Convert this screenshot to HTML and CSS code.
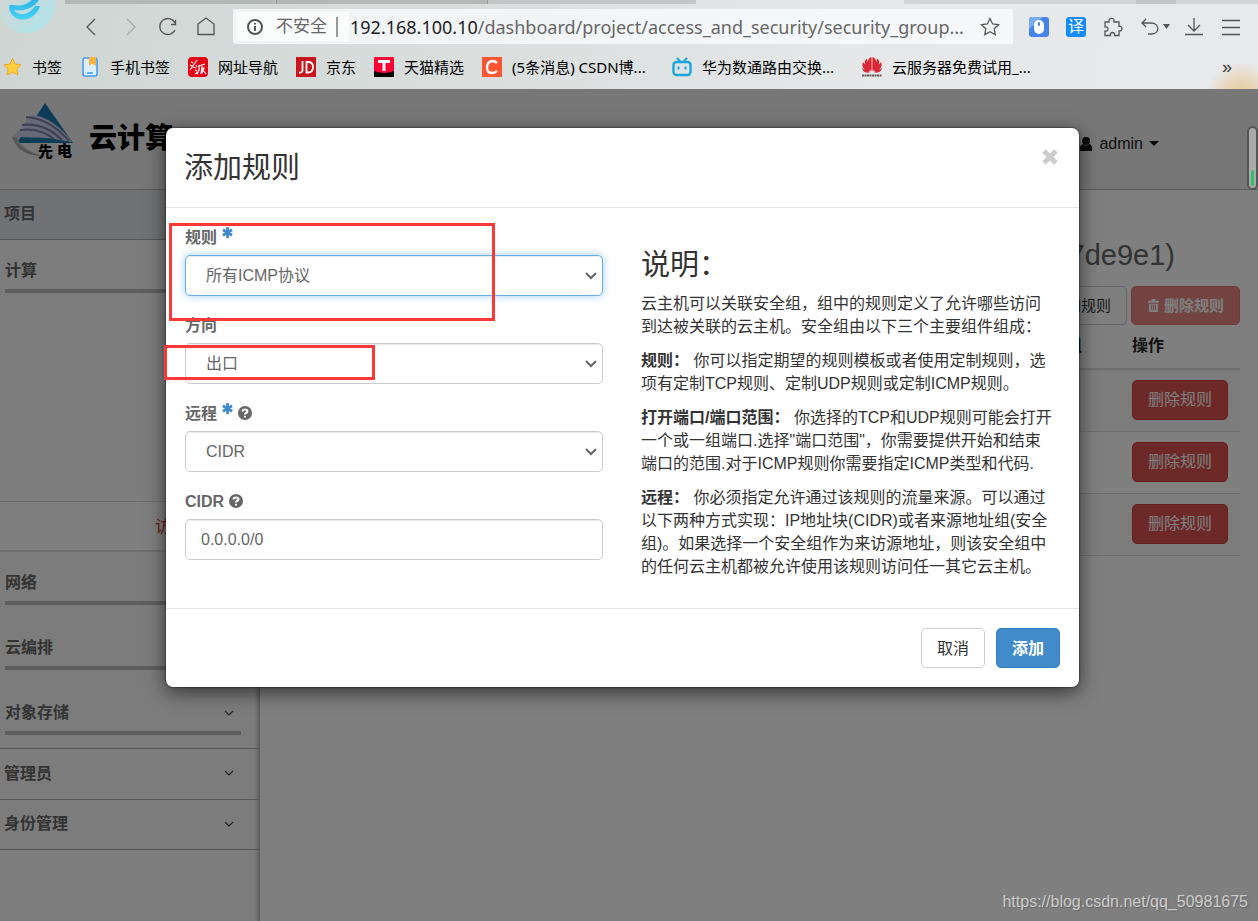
FILE: index.html
```html
<!DOCTYPE html>
<html lang="zh-CN">
<head>
<meta charset="utf-8">
<title>添加规则</title>
<link rel="stylesheet" href="styles.css">
</head>
<body>
<header class="browser">
  <div class="tabs"><span class="tab tab-first"></span><span class="tab tab-second"></span><span class="tab tab-third"></span><span class="tab-current"></span><span class="tab tab-light"></span><span class="tab tab-new"></span><span class="tab-rest"></span></div>
  <div class="toolbar">
    <svg class="brand" viewBox="0 0 56 34" aria-hidden="true">
      <defs>
        <linearGradient id="disc" x1="0" y1="0" x2="1" y2="1"><stop offset="0.300" stop-color="#cfd8d7"/><stop offset="1" stop-color="#a9e4ec"/></linearGradient>
        <linearGradient id="swirl" x1="0" y1="0" x2="0" y2="1"><stop offset="0" stop-color="#2bb0e6"/><stop offset="1" stop-color="#43d3f3"/></linearGradient>
      </defs>
      <circle cx="26" cy="4" r="29" fill="url(#disc)"/>
      <path d="M9 7C10 17 18 21 27 19C34 17 38 12 40 6L35 6C31 12 25 15 20 14C17 13 15 12 14 10C24 12 36 8 41 -4L34 -4C31 3 22 7 13 5Q9 4 9 7Z" fill="url(#swirl)"/>
    </svg>
    <nav class="nav-buttons">
      <button class="icon-button" aria-label="后退"><svg viewBox="0 0 20 20"><path d="M13 2L5 10L13 18"/></svg></button>
      <button class="icon-button faint" aria-label="前进"><svg viewBox="0 0 20 20"><path d="M7 2L15 10L7 18"/></svg></button>
      <button class="icon-button" aria-label="刷新"><svg viewBox="0 0 20 20"><path d="M17 6A8 8 0 1 0 17 13M17.500 3V7.500H13"/></svg></button>
      <button class="icon-button" aria-label="主页"><svg viewBox="0 0 20 20"><path d="M2 7L10 1L18 7V17.500H2Z"/></svg></button>
    </nav>
    <div class="address">
      <div class="security">
        <svg class="info" viewBox="0 0 18 18"><circle cx="9" cy="9" r="7"/><path d="M9 8V13M9 5V6.500"/></svg>
        <span>不安全</span><i class="security-bar"></i>
      </div>
      <div class="url"><b>192.168.100.10</b>/dashboard/project/access_and_security/security_group...</div>
      <button class="icon-button" aria-label="收藏"><svg viewBox="0 0 20 20"><path d="M10 1.500L12.600 7L18.500 7.700L14.200 11.800L15.300 17.700L10 14.800L4.700 17.700L5.800 11.800L1.500 7.700L7.400 7Z"/></svg></button>
    </div>
    <div class="extensions">
      <button class="icon-button" aria-label="鼠标手势"><svg class="solid" viewBox="0 0 20 20"><rect width="20" height="20" rx="3" fill="#4585ea"/><path d="M0 12V3Q0 0 3 0H14Z" fill="#79acf2"/><rect x="5" y="3" width="10" height="14" rx="5" fill="#fff"/><rect x="9" y="5" width="2" height="4" rx="1" fill="#4585ea"/></svg></button>
      <button class="translate" aria-label="翻译">译</button>
      <button class="icon-button" aria-label="扩展"><svg viewBox="0 0 20 20"><path d="M2 5H6C5 1 11 0 11 3.500V5H16V9.500C20 8 20 15 16 14V18.500H11.500C12.500 14.500 6.500 14.500 7.500 18.500H2V14C6 15 6 9 2 10Z"/></svg></button>
      <button class="icon-button undo" aria-label="撤销"><svg viewBox="0 0 30 20"><path d="M6 2L2 6L6 10M2 6H11C20 6 20 17 11 17H8"/><path d="M23 7H30L26.500 12Z" fill="#555" stroke="none"/></svg></button>
      <button class="icon-button" aria-label="下载"><svg viewBox="0 0 20 20"><path d="M10 1V13M4 8L10 14L16 8M1 17.500H19"/></svg></button>
      <button class="icon-button" aria-label="菜单"><svg viewBox="0 0 20 20"><path d="M1 3.500H19M1 10.500H19M1 17.500H19"/></svg></button>
    </div>
  </div>
  <nav class="bookmarks">
    <a href="#" class="bookmark"><svg viewBox="0 0 20 20"><path d="M10.500 1.500L13.200 7L19 7.800L14.800 12L15.900 18L10.500 15.200L5.100 18L6.200 12L2 7.800L7.800 7Z" fill="#ffcf3c" stroke="#f5a52d"/></svg><span>书签</span></a>
    <a href="#" class="bookmark"><svg viewBox="0 0 20 20"><rect x="3" y="1" width="14" height="18" rx="2" fill="#dcefff" stroke="#3f9bf5" stroke-width="1.500"/><path d="M8 0H16V9L12.500 6.500L9 9V0Z" fill="#f8b23e"/><path d="M7 16H13" stroke="#3f9bf5" stroke-width="1.500"/></svg><span>手机书签</span></a>
    <a href="#" class="bookmark"><svg viewBox="0 0 20 20"><rect width="20" height="20" rx="4" fill="#e60012"/><path d="M3 5L5 6M2 8L4 9M9 3L2 13M5 10L8 11M8 8L9 10M7 13L9 14M7 17L10 15M11 8V13L9 17M11 9L17 7M14 9L13 17M13 11H16L14 16M14 12L18 17" stroke="#fff" stroke-width="1.200" fill="none"/></svg><span>网址导航</span></a>
    <a href="#" class="bookmark"><svg viewBox="0 0 20 20"><rect width="20" height="20" fill="#c9151e"/><path d="M6.500 4V13Q6.500 16 3 15.500M10.500 5V15.500H12Q17 15.500 17 10Q17 5 12 5Z" stroke="#fff" stroke-width="1.800" fill="none"/></svg><span>京东</span></a>
    <a href="#" class="bookmark"><svg viewBox="0 0 20 20"><rect width="20" height="20" fill="#ff0036"/><path d="M0 14Q10 18 20 14V20H0Z" fill="#000"/><path d="M4 4.500H16M10 4V14" stroke="#fff" stroke-width="3" fill="none"/></svg><span>天猫精选</span></a>
    <a href="#" class="bookmark long"><svg viewBox="0 0 20 20"><rect width="20" height="20" fill="#fc5531"/><path d="M15 6Q13 4 10.500 4Q5 4.500 5 10.500Q5 16 10 16Q13 16 15 14" stroke="#fff" stroke-width="2.400" fill="none"/></svg><span>(5条消息) CSDN博...</span></a>
    <a href="#" class="bookmark long"><svg viewBox="0 0 20 20"><rect x="1.500" y="5" width="17" height="13" rx="3" fill="none" stroke="#19a5dd" stroke-width="2.400"/><path d="M5 1L8 4M15 1L12 4M6.500 9.500V12.500M13.500 9.500V12.500" stroke="#19a5dd" stroke-width="2"/></svg><span>华为数通路由交换...</span></a>
    <a href="#" class="bookmark long"><svg viewBox="0 0 20 20"><g fill="#dc2535"><path d="M9.700 14C4 8 5 1 9.500 0ZM10.300 14C16 8 15 1 10.500 0ZM9 14C3 11 1 5 4.500 1.500ZM11 14C17 11 19 5 15.500 1.500ZM8.500 14.500C2 14 -1 9 1 5ZM11.500 14.500C18 14 21 9 19 5ZM8 15.200C4 16.500 1 15 0 11ZM12 15.200C16 16.500 19 15 20 11Z"/></g><path d="M0 18.500H20" stroke="#655" stroke-width="2" stroke-dasharray="2 .5"/></svg><span>云服务器免费试用_...</span></a>
    <button class="more" aria-label="更多书签">»</button>
  </nav>
</header>

<div class="app">
  <header class="site-header">
    <svg class="logo" viewBox="0 0 64 64" aria-hidden="true">
      <path d="M34 2L62 42H8Z" fill="#1878ad"/>
      <path d="M15 16L22 14C37 16 50 26 61 41L47 39C30 36 18 38 4 37L1 36L8 29L12 28L11 24L15 21Z" fill="#cdd1ea"/>
      <path d="M15 16C32 17 46 26 58 40M11 24C27 22 41 29 51 39M9 29C23 27 34 31 43 38" fill="none" stroke="#7780ab" stroke-width="2"/>
      <path d="M6 41L10 36C22 37 36 35 61 42Z" fill="#1878ad"/>
      <path d="M1 36L6 37C10 46 20 53 33 55C18 56 5 49 1 36Z" fill="#aaa"/>
      <path d="M6 40C12 48 24 54 54 55" fill="none" stroke="#ddd" stroke-width="1"/>
      <text x="27" y="56" class="logo-text">先</text><text x="46" y="55" class="logo-text">电</text>
    </svg>
    <strong class="product">云计算</strong>
    <button class="user"><svg viewBox="0 0 14 14"><circle cx="7" cy="4" r="4"/><path d="M1 14Q0 8 4 7Q7 10 10 7Q14 8 13 14Z"/></svg>admin<i class="caret"></i></button>
  </header>
  <div class="columns">
    <aside class="sidebar">
      <a href="#" class="side-item selected">项目</a>
      <div class="group"><a href="#">计算</a></div>
      <div class="submenu"></div>
      <a href="#" class="active-link"><span>访问 &amp; 安全</span></a>
      <div class="group"><a href="#">网络</a></div>
      <div class="group"><a href="#">云编排</a></div>
      <div class="group"><a href="#">对象存储<svg class="chev" viewBox="0 0 10 10"><path d="M1 3L5 7L9 3"/></svg></a></div>
      <a href="#" class="side-item ruled">管理员<svg class="chev" viewBox="0 0 10 10"><path d="M1 3L5 7L9 3"/></svg></a>
      <a href="#" class="side-item">身份管理<svg class="chev" viewBox="0 0 10 10"><path d="M1 3L5 7L9 3"/></svg></a>
    </aside>
    <main class="content">
      <h1>7de9e1)</h1>
      <div class="actions">
        <button class="btn">添加规则</button>
        <button class="btn btn-danger" disabled><svg viewBox="0 0 14 14"><path d="M1 2H5V0H9V2H13V4H1ZM2 5H12V14H2Z"/><path d="M5 6V12M7 6V12M9 6V12" stroke="#d9534f"/></svg>删除规则</button>
      </div>
      <table class="rules">
        <thead><tr><th class="group-col">安全组</th><th class="action-col">操作</th></tr></thead>
        <tbody>
          <tr class="odd"><td></td><td><button class="btn btn-danger">删除规则</button></td></tr>
          <tr><td></td><td><button class="btn btn-danger">删除规则</button></td></tr>
          <tr class="odd"><td></td><td><button class="btn btn-danger">删除规则</button></td></tr>
        </tbody>
      </table>
    </main>
  </div>

  <div class="backdrop">
    <section class="modal" role="dialog" aria-labelledby="modal-title">
      <header class="modal-header">
        <h2 id="modal-title">添加规则</h2>
        <button class="close" aria-label="关闭"><svg viewBox="0 0 16 16"><path d="M2 2L14 14M14 2L2 14"/></svg></button>
      </header>
      <div class="modal-body">
        <form class="form" id="rule-form">
          <div class="field">
            <label for="rule">规则 <svg class="star" viewBox="0 0 12 12"><path d="M6 0V12M1 3L11 9M11 3L1 9"/></svg></label>
            <div class="select-wrap"><select id="rule" class="control focused"><option>所有ICMP协议</option></select><svg class="arrow" viewBox="0 0 12 12"><path d="M1 3L6 8L11 3"/></svg></div>
          </div>
          <div class="field">
            <label for="direction">方向</label>
            <div class="select-wrap"><select id="direction" class="control"><option>出口</option></select><svg class="arrow" viewBox="0 0 12 12"><path d="M1 3L6 8L11 3"/></svg></div>
          </div>
          <div class="field">
            <label for="remote">远程 <svg class="star" viewBox="0 0 12 12"><path d="M6 0V12M1 3L11 9M11 3L1 9"/></svg> <svg class="help" viewBox="0 0 14 14"><circle cx="7" cy="7" r="7"/><path d="M4.500 5.500Q4.500 3.500 7 3.500Q9.500 3.500 9.500 5.500Q9.500 6.500 8 7Q7 7.500 7 8.500M7 9.700V11.500"/></svg></label>
            <div class="select-wrap"><select id="remote" class="control"><option>CIDR</option></select><svg class="arrow" viewBox="0 0 12 12"><path d="M1 3L6 8L11 3"/></svg></div>
          </div>
          <div class="field">
            <label for="cidr">CIDR <svg class="help" viewBox="0 0 14 14"><circle cx="7" cy="7" r="7"/><path d="M4.500 5.500Q4.500 3.500 7 3.500Q9.500 3.500 9.500 5.500Q9.500 6.500 8 7Q7 7.500 7 8.500M7 9.700V11.500"/></svg></label>
            <input id="cidr" class="control" type="text" value="0.0.0.0/0">
          </div>
          <span class="mark mark-rule"></span>
          <span class="mark mark-direction"></span>
        </form>
        <div class="help-text">
          <h3>说明：</h3>
          <p>云主机可以关联安全组，组中的规则定义了允许哪些访问<br>到达被关联的云主机。安全组由以下三个主要组件组成：</p>
          <p><b>规则：</b> 你可以指定期望的规则模板或者使用定制规则，选<br>项有定制TCP规则、定制UDP规则或定制ICMP规则。</p>
          <p><b>打开端口/端口范围：</b> 你选择的TCP和UDP规则可能会打开<br>一个或一组端口.选择"端口范围"，你需要提供开始和结束<br>端口的范围.对于ICMP规则你需要指定ICMP类型和代码.</p>
          <p><b>远程：</b> 你必须指定允许通过该规则的流量来源。可以通过<br>以下两种方式实现：IP地址块(CIDR)或者来源地址组(安全<br>组)。如果选择一个安全组作为来访源地址，则该安全组中<br>的任何云主机都被允许使用该规则访问任一其它云主机。</p>
        </div>
      </div>
      <footer class="modal-footer">
        <button class="btn">取消</button>
        <button class="btn btn-primary" type="submit" form="rule-form">添加</button>
      </footer>
    </section>
  </div>
  <div class="meter"><i></i></div>
  <div class="watermark">https://blog.csdn.net/qq_50981675</div>
</div>
</body>
</html>
```
FILE: styles.css
```css
* { box-sizing: border-box; }
body {
  margin: 0;
  min-height: 100vh;
  display: flex;
  flex-direction: column;
  font: 16px/23px "Liberation Sans", "Noto Sans CJK SC", sans-serif;
  color: #333;
}
button, select, input { font: inherit; color: inherit; margin: 0; }
button { background: none; border: 0; padding: 0; }
a { color: inherit; text-decoration: none; }
svg { display: block; flex: none; }

/* browser frame */
.browser {
  background:
    radial-gradient(circle at 1242px 98px, #e8c48a 0, rgba(232, 210, 170, 0) 36px),
    linear-gradient(100deg, #ced5d3 0, #dadfde 40%, #e6e8e9 70%, #e8e9eb 100%);
  height: 89px;
  overflow: hidden;
}
.tabs { display: flex; height: 4px; padding-left: 65px; }
.tab { background: #b4b9b8; border-right: 1px solid #999; }
.tab-first, .tab-second { flex: 211; }
.tab-third { flex: 208; border-right: 0; background: #c3c6c6; }
.tab-current { flex: 208; }
.tab-light { flex: 233; background: #d2d3d5; border-right: 0; }
.tab-new { flex: 40; background: #c4c5c7; border-right: 0; }
.tab-rest { flex: 82; background: #d2d5d5; }
.toolbar { display: flex; align-items: center; height: 45px; padding-right: 17px; }
.brand { width: 56px; height: 34px; align-self: flex-start; margin: -4px 26px 0 0; }
.nav-buttons { display: flex; gap: 18px; margin-right: 17px; }
.icon-button svg { width: 20px; height: 20px; fill: none; stroke: #555; stroke-width: 1.300; }
.icon-button .solid { stroke: none; }
.faint svg { stroke: #aaa; }
.address {
  flex: 1;
  min-width: 0;
  display: flex;
  align-items: center;
  height: 35px;
  padding: 0 13px 0 3px;
  background: rgba(250, 252, 254, .75);
  border-radius: 2px;
}
.security {
  display: flex;
  align-items: center;
  width: 113px;
  height: 29px;
  padding-left: 10px;
  background: #fafbfb;
  color: #666;
  font-size: 17px;
}
.info { width: 18px; height: 18px; margin-right: 12px; fill: none; stroke: #555; stroke-width: 2; }
.security-bar { width: 2px; height: 20px; margin-left: 9px; background: #999; }
.url {
  flex: 1;
  min-width: 0;
  overflow: hidden;
  white-space: nowrap;
  padding-left: 1px;
  color: #666;
  font: 18px/28px "Noto Sans", sans-serif;
}
.url b { font-weight: 400; color: #222; }
.extensions { display: flex; align-items: center; gap: 17px; margin-left: 16px; }
.translate {
  width: 20px;
  height: 20px;
  border-radius: 3px;
  background: #118bff;
  color: #fff;
  font-size: 16px;
  line-height: 20px;
}
.undo { margin-right: -3px; }
.undo svg { width: 30px; }
.bookmarks { display: flex; align-items: center; gap: 18px; height: 36px; padding: 0 26px 0 2px; }
.bookmark { display: flex; align-items: center; gap: 10px; color: #000; font: 15px/22px "Noto Sans", "Noto Sans CJK SC", sans-serif; white-space: nowrap; }
.bookmark svg { width: 20px; height: 20px; }
.long span { width: 142px; }
.more { margin-left: auto; font-size: 18px; line-height: 20px; }

/* dashboard */
.app { flex: 1; display: flex; flex-direction: column; position: relative; background: #fff; }
.site-header { display: flex; align-items: center; height: 101px; padding: 0 99px 0 11px; background: #eee; border-bottom: 1px solid #bbb; }
.logo { width: 64px; height: 64px; margin: 0 14px 12px 0; }
.logo-text { font: 900 15px "Noto Sans CJK SC", sans-serif; fill: #000; }
.product { color: #000; font-size: 28px; font-weight: 900; line-height: 40px; }
.user { display: flex; align-items: center; gap: 6px; margin: 9px 0 0 auto; color: #222; }
.user svg { width: 14px; height: 14px; fill: #111; }
.caret { border: 5px solid transparent; border-top-color: #111; border-bottom: 0; }
.columns { flex: 1; display: flex; }
.sidebar {
  width: 260px;
  flex: none;
  background: #f9f9f9;
  border-right: 1px solid #bbb;
  box-shadow: inset -4px 0 4px -3px #aaa;
  font-weight: 700;
  color: #666;
}
.side-item { display: flex; align-items: center; justify-content: space-between; height: 50px; padding: 0 25px 2px 4px; border-bottom: 1px solid #aaa; }
.selected { background: #e0e5e9; }
.ruled { margin-top: 13px; border-top: 1px solid #aaa; height: 52px; }
.group { margin: 0 18px 0 5px; padding-top: 19px; border-bottom: 4px solid #bcbcbc; }
.group a { display: flex; align-items: center; justify-content: space-between; height: 30px; padding: 0 7px 7px 0; }
.group + .group { margin-top: 12px; }
.chev { width: 10px; height: 10px; fill: none; stroke: #444; stroke-width: 1.200; }
.submenu { height: 208px; }
.active-link { display: block; height: 51px; padding: 13px 0 0 155px; background: #fff; border-top: 1px solid #ddd; border-bottom: 2px solid #ddd; color: #d43f1a; font-weight: 400; }
.content { flex: 1; min-width: 0; padding: 44px 18px 0 18px; }
.content h1 { margin: 0 65px 10px 0; font-size: 29px; line-height: 42px; font-weight: 400; text-align: right; color: #666; }
.actions { display: flex; justify-content: flex-end; gap: 4px; }
.btn { height: 40px; padding: 0 15px; border: 1px solid #ccc; border-radius: 5px; background: #fff; white-space: nowrap; }
.actions .btn { display: flex; align-items: center; gap: 4px; height: 39px; font-size: 15px; }
.actions svg { width: 13px; height: 13px; fill: #fff; }
.btn-danger { background: #d9534f; border-color: #d43f3a; color: #fff; }
.btn-danger:disabled { opacity: .7; font-weight: 700; }
.btn-primary { background: #428bca; border-color: #357ebd; color: #fff; font-weight: 700; }
.rules { width: 100%; border-collapse: collapse; }
.rules th { height: 44px; padding: 0 0 2px 8px; border-bottom: 2px solid #ddd; color: #222; text-align: left; }
.rules .group-col { padding-right: 42px; text-align: right; }
.rules .action-col { width: 116px; }
.rules td { height: 62px; padding: 0 0 1px 8px; border-bottom: 1px solid #ddd; }
.odd { background: #f9f9f9; }

/* dialog */
.backdrop { position: absolute; inset: 0; padding: 39px 179px 0 166px; background: rgba(0, 0, 0, .5); }
.modal { max-width: 960px; margin: 0 auto; background: #fff; border-radius: 7px; box-shadow: 0 5px 20px rgba(0, 0, 0, .6), 0 0 2px #000; }
.modal-header { display: flex; justify-content: space-between; height: 80px; padding: 20px 21px 0 18px; border-bottom: 1px solid #e5e5e5; }
.modal h2, .modal h3 { margin: 0; font-size: 29px; line-height: 40px; font-weight: 400; }
.close { align-self: flex-start; margin-top: 1px; }
.close svg { width: 16px; height: 16px; stroke: #ccc; stroke-width: 5; }
.modal-body { display: grid; grid-template-columns: 1fr 1fr; gap: 38px; padding: 18px 20px 19px 19px; }
.form { display: flex; flex-direction: column; gap: 18px; position: relative; }
.field { display: flex; flex-direction: column; gap: 7px; }
.field label { display: flex; align-items: center; gap: 5px; line-height: 23px; font-weight: 700; color: #666; }
.star { width: 11px; height: 11px; margin-bottom: 9px; stroke: #428bca; stroke-width: 3; }
.help { width: 14px; height: 14px; fill: #666; }
.help path { fill: none; stroke: #fff; stroke-width: 2; }
.select-wrap { display: grid; align-items: center; }
.select-wrap > * { grid-area: 1 / 1; }
.arrow { width: 12px; height: 12px; margin-right: 6px; justify-self: end; fill: none; stroke: #666; stroke-width: 2; pointer-events: none; }
.control { width: 100%; height: 41px; padding: 0 15px; border: 1px solid #ccc; border-radius: 5px; background: #fff; box-shadow: inset 0 1px 1px rgba(0, 0, 0, .08); color: #666; outline: 0; }
select.control { appearance: none; padding: 0 20px; }
.focused { border-color: #66afe9; box-shadow: inset 0 1px 1px rgba(0, 0, 0, .08), 0 0 9px rgba(102, 175, 233, .6); }
.field label { height: 22px; }
.mark { position: absolute; border: 3px solid #fb3838; pointer-events: none; }
.mark-rule { left: -16px; top: -3px; width: 326px; height: 98px; }
.mark-direction { left: -21px; top: 119px; width: 211px; height: 35px; }
.help-text { padding-top: 19px; white-space: nowrap; }
.help-text h3 { margin-bottom: 7px; }
.help-text p { margin: 0 0 11px; }
.modal-footer { display: flex; justify-content: flex-end; gap: 11px; padding: 19px; border-top: 1px solid #e5e5e5; }

.meter { position: absolute; right: 0; top: 37px; width: 11px; height: 64px; padding: 2px; border: 2px solid #555; border-radius: 6px; background: #aaa; display: flex; align-items: flex-end; }
.meter i { width: 100%; height: 16px; border-radius: 2px; background: #2fc069; }
.watermark { position: absolute; right: 10px; bottom: 8px; color: #ccc; text-shadow: 1px 1px 1px #666; }
```
